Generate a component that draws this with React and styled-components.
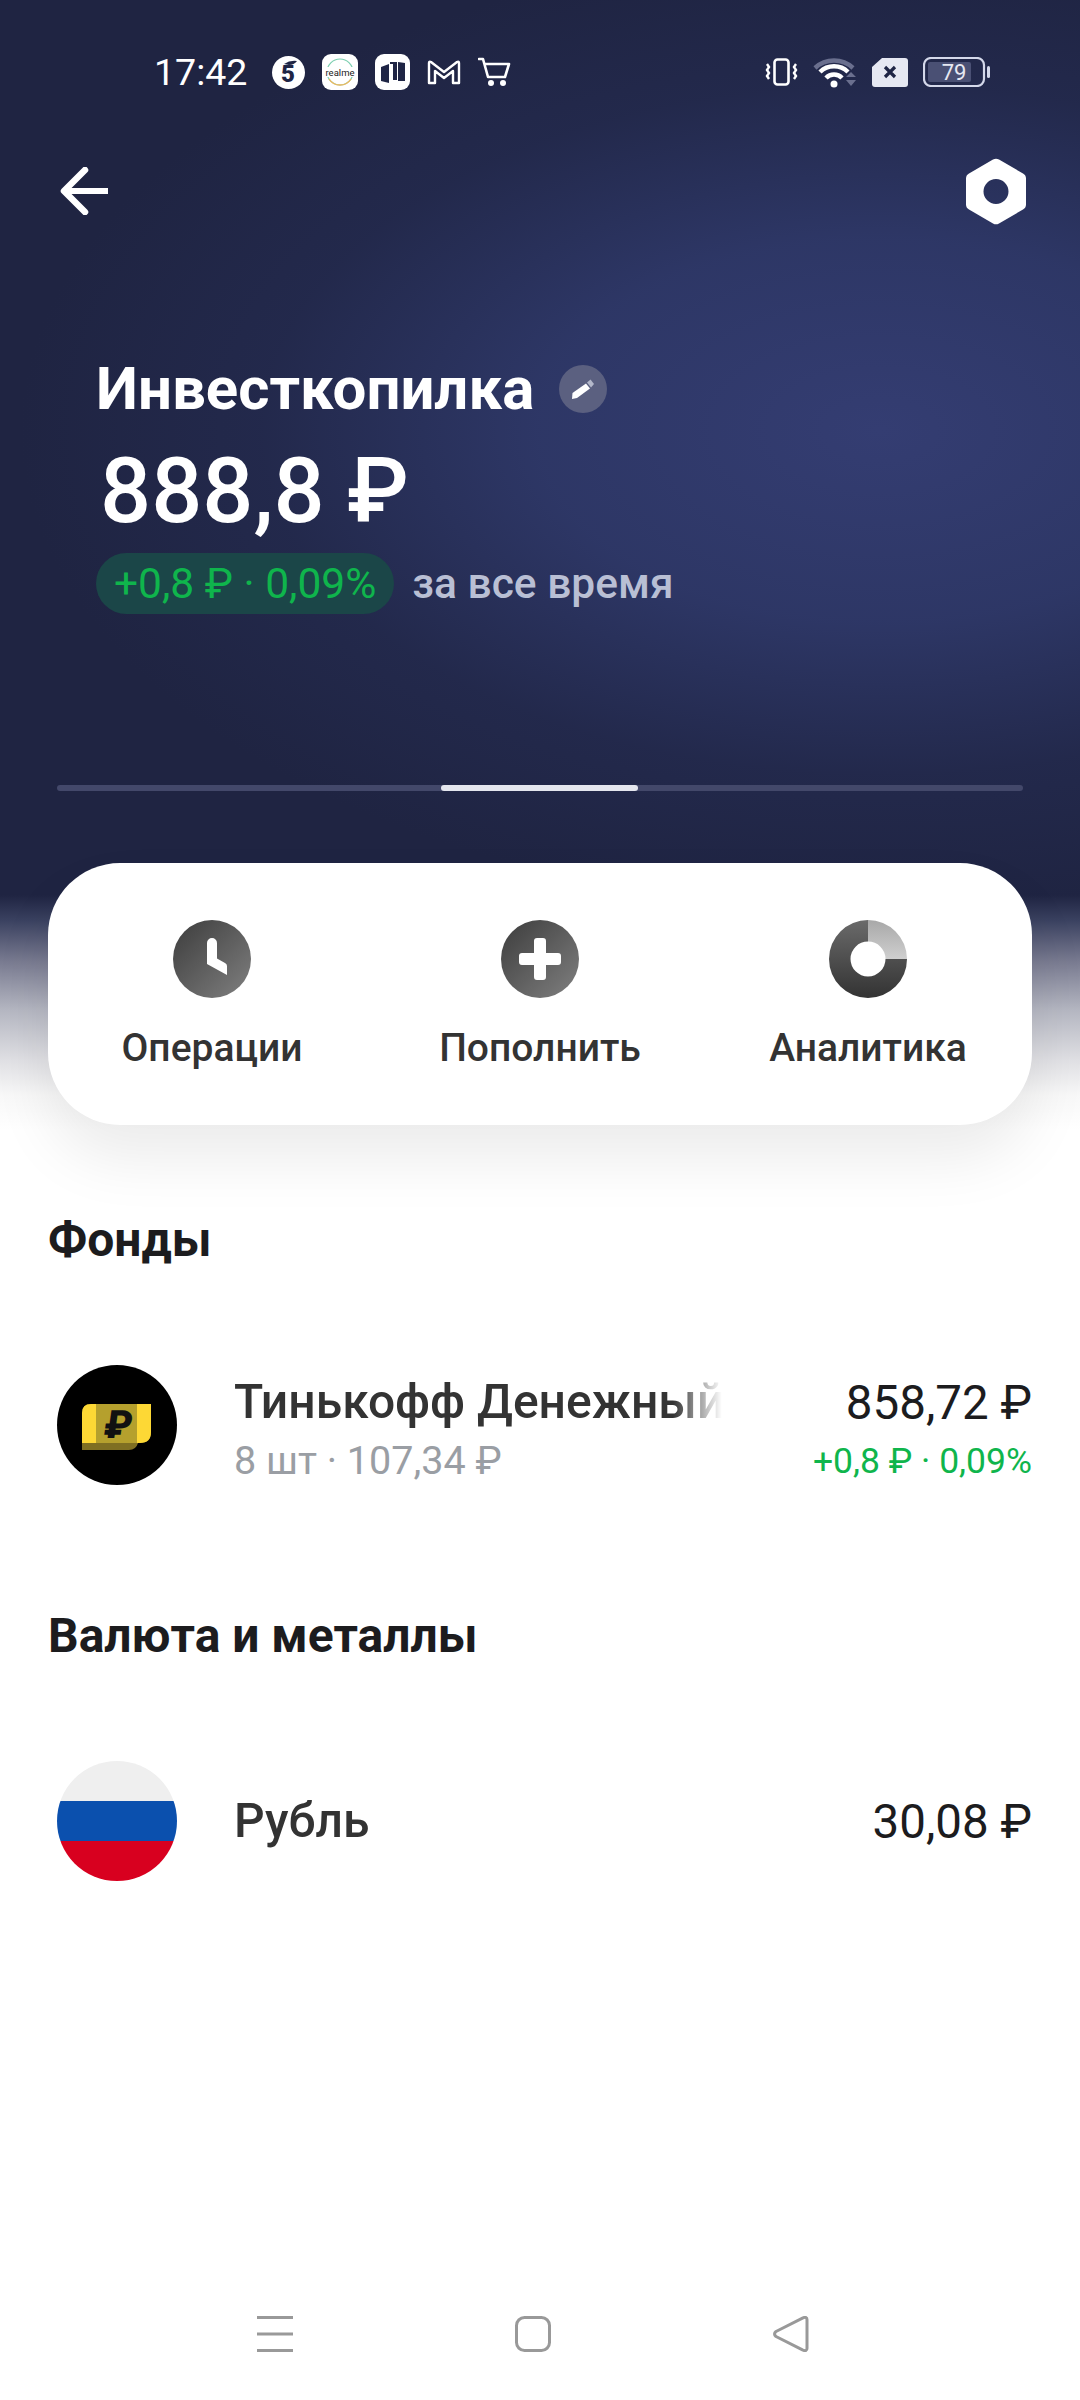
import React from "react";
import styled, { createGlobalStyle } from "styled-components";

const GlobalStyle = createGlobalStyle`
  html, body { margin: 0; padding: 0; background: #fff; }
  * { box-sizing: border-box; }
`;

const Page = styled.div`
  width: 1080px;
  height: 2400px;
  overflow: hidden;
  display: flex;
  flex-direction: column;
  font-family: Roboto, "Noto Sans", sans-serif;
  background:
    radial-gradient(ellipse 860px 480px at 880px 430px, rgba(52, 61, 114, 1) 0, rgba(48, 58, 108, 0.85) 40%, rgba(40, 48, 90, 0.4) 72%, rgba(31, 36, 66, 0) 100%) 0 0 / 1080px 915px no-repeat,
    linear-gradient(
      #1f2442 0,
      #1f2442 895px,
      #3a4160 920px,
      #77798f 960px,
      #b5b7c2 1010px,
      #e0e0e4 1060px,
      #f8f8f8 1095px,
      #ffffff 1130px
    );
`;

const StatusBar = styled.div`
  height: 142px;
  flex: none;
  display: flex;
  align-items: center;
  padding: 2px 90px 0 154px;
  color: #fff;
`;

const Clock = styled.span`
  font-size: 37.500px;
  line-height: 42px;
  width: 118px;
`;

const StatusIcons = styled.div`
  display: flex;
  align-items: center;
  gap: ${(p) => p.$gap}px;
  margin-left: ${(p) => (p.$end ? "auto" : "0")};
`;

const Toolbar = styled.div`
  height: 96px;
  flex: none;
  display: flex;
  align-items: center;
  justify-content: space-between;
  padding: 2px 54px 0 60px;
`;

const Hero = styled.div`
  flex: none;
  margin-top: 119px;
  padding-left: 96px;
  display: flex;
  flex-direction: column;
  align-items: flex-start;
`;

const TitleRow = styled.div`
  display: flex;
  align-items: center;
  gap: 25px;
  height: 64px;
`;

const Title = styled.h1`
  margin: 0;
  font-size: 60px;
  line-height: 64px;
  font-weight: 700;
  color: #fff;
`;

const EditBadge = styled.div`
  width: 48px;
  height: 48px;
  border-radius: 50%;
  background: #5b6080;
  display: flex;
  align-items: center;
  justify-content: center;
`;

const Amount = styled.div`
  margin: 19px 0 0 4px;
  font-size: 90px;
  line-height: 104px;
  font-weight: 500;
  color: #fff;
`;

const ChangeRow = styled.div`
  margin-top: 9px;
  display: flex;
  align-items: center;
  gap: 18px;
`;

const ChangePill = styled.div`
  height: 61px;
  padding: 0 18px;
  border-radius: 31px;
  background: #1b4648;
  color: #0fb54c;
  font-size: 42.500px;
  line-height: 61px;
`;

const ChangeNote = styled.span`
  font-size: 42.500px;
  font-weight: 500;
  color: #b9bfd4;
`;

const Progress = styled.div`
  flex: none;
  margin: 171px 57px 0;
  height: 6px;
  border-radius: 3px;
  background: #43486a;
  position: relative;
`;

const ProgressThumb = styled.div`
  position: absolute;
  left: 384px;
  top: 0;
  width: 197px;
  height: 6px;
  border-radius: 3px;
  background: #e4e6ee;
`;

const ActionCard = styled.div`
  flex: none;
  margin: 72px 48px 0;
  height: 262px;
  border-radius: 72px;
  background: #fff;
  box-shadow: 0 34px 60px rgba(0, 0, 0, 0.08);
  display: grid;
  grid-template-columns: repeat(3, 1fr);
  padding-top: 57px;
`;

const Action = styled.div`
  display: flex;
  flex-direction: column;
  align-items: center;
  gap: 28px;
`;

const ActionLabel = styled.span`
  font-size: 39px;
  line-height: 44px;
  font-weight: 500;
  color: #333;
`;

const Section = styled.section`
  flex: none;
  margin-top: ${(p) => p.$top}px;
  padding: 0 48px;
`;

const SectionTitle = styled.h2`
  margin: 0;
  font-size: 48px;
  line-height: 52px;
  font-weight: 700;
  color: #1c1c1e;
`;

const Row = styled.div`
  margin-top: 99px;
  height: 120px;
  display: flex;
  align-items: center;
  padding-left: 9px;
`;

const RowIcon = styled.div`
  flex: none;
  width: 120px;
  height: 120px;
  border-radius: 50%;
  overflow: hidden;
  margin-right: 57px;
`;

const RowMain = styled.div`
  flex: 1;
  min-width: 0;
  display: flex;
  flex-direction: column;
`;

const RowTitle = styled.div`
  width: 488px;
  font-size: 48px;
  line-height: 56px;
  font-weight: 500;
  color: #333;
  white-space: nowrap;
  overflow: hidden;
  -webkit-mask-image: linear-gradient(90deg, #000 90%, transparent);
  mask-image: linear-gradient(90deg, #000 90%, transparent);
`;

const RowSub = styled.div`
  margin: 9px 0 -6px;
  font-size: 39.500px;
  line-height: 44px;
  color: #9a9ea4;
`;

const RowAside = styled.div`
  flex: none;
  padding-top: 2px;
  display: flex;
  flex-direction: column;
  align-items: flex-end;
`;

const RowValue = styled.div`
  font-size: 47.500px;
  line-height: 56px;
  color: #1c1c1e;
`;

const RowDelta = styled.div`
  margin: 8px 0 -6px;
  font-size: 35.500px;
  line-height: 44px;
  color: #0fb54c;
`;

const NavBar = styled.nav`
  margin-top: auto;
  height: 84px;
  flex: none;
  display: flex;
  align-items: flex-start;
  padding-left: 257px;
  gap: 222px;
`;

const Svg = ({ w, h, children }) => (
  <svg width={w} height={h} viewBox={`0 0 ${w} ${h}`} fill="none" style={{ display: "block", flex: "none" }}>
    {children}
  </svg>
);

const OperationsIcon = () => (
  <Svg w={78} h={78}>
    <defs>
      <linearGradient id="g1" x1="0" y1="0" x2="1" y2="1">
        <stop offset="0" stopColor="#3c3c3c" />
        <stop offset="1" stopColor="#808080" />
      </linearGradient>
    </defs>
    <circle cx="39" cy="39" r="39" fill="url(#g1)" />
    <path d="M34 23a5 5 0 0 1 10 0v15.500l8 4.500q2 1.200 2 3V55L34 44Z" fill="#fff" />
  </Svg>
);

const TopUpIcon = () => (
  <Svg w={78} h={78}>
    <circle cx="39" cy="39" r="39" fill="url(#g1)" />
    <path d="M33 21a3 3 0 0 1 3-3h6a3 3 0 0 1 3 3v12h12a3 3 0 0 1 3 3v6a3 3 0 0 1-3 3H45v12a3 3 0 0 1-3 3h-6a3 3 0 0 1-3-3V45H21a3 3 0 0 1-3-3v-6a3 3 0 0 1 3-3h12Z" fill="#fff" />
  </Svg>
);

const AnalyticsIcon = () => (
  <Svg w={78} h={78}>
    <defs>
      <linearGradient id="g2" x1="0" y1="0" x2="0" y2="1">
        <stop offset="0" stopColor="#6a6a6a" />
        <stop offset="1" stopColor="#333" />
      </linearGradient>
      <linearGradient id="g3" x1="0" y1="0" x2="0" y2="1">
        <stop offset="0" stopColor="#a8a8a8" />
        <stop offset="1" stopColor="#cfcfcf" />
      </linearGradient>
    </defs>
    <path d="M39 0a39 39 0 1 0 39 39H56.500A17.500 17.500 0 1 1 39 21.500Z" fill="url(#g2)" />
    <path d="M39 0a39 39 0 0 1 39 39H56.500A17.500 17.500 0 0 0 39 21.500Z" fill="url(#g3)" />
  </Svg>
);

const FundIcon = () => (
  <Svg w={120} h={120}>
    <rect width="120" height="120" fill="#000" />
    <path d="M25 85V48q0-9 9-9h60v28q0 11-11 11H81q-2 7-9 7H25Z" fill="#7f6f22" />
    <path d="M34 39h60v28q0 11-11 11H25V48q0-9 9-9Z" fill="#fdd835" />
    <rect x="39" y="39" width="41" height="39" fill="#b5a02d" />
    <text x="60" y="73" textAnchor="middle" fontFamily="Roboto" fontWeight="900" fontSize="39" fill="#111" transform="skewX(-8) translate(10 0)">₽</text>
  </Svg>
);

const RubleIcon = () => (
  <Svg w={120} h={120}>
    <rect width="120" height="40" fill="#efefef" />
    <rect y="40" width="120" height="40" fill="#0b50ae" />
    <rect y="80" width="120" height="40" fill="#d8001f" />
  </Svg>
);

export default function App() {
  return (
    <Page>
      <GlobalStyle />
      <StatusBar>
        <Clock>17:42</Clock>
        <StatusIcons $gap={17}>
          <Svg w={33} h={33}>
            <circle cx="16.500" cy="16.500" r="16.500" fill="#fff" />
            <text x="16" y="26" textAnchor="middle" fontFamily="Roboto" fontWeight="900" fontSize="24" fill="#1f2545">5</text>
            <path d="M12 8q6-4 13-3-3 4-8 4Z" fill="#1f2545" />
          </Svg>
          <Svg w={36} h={36}>
            <rect width="36" height="36" rx="9" fill="#fff" />
            <circle cx="18" cy="18" r="13" stroke="#7ccfb0" strokeWidth="1.200" />
            <path d="M7 25a13 13 0 0 0 22 0" stroke="#f2b85c" strokeWidth="1.400" />
            <rect x="3" y="13" width="30" height="10" fill="#fff" />
            <text x="18" y="21.500" textAnchor="middle" fontFamily="Roboto" fontSize="9.500" fill="#222">realme</text>
          </Svg>
          <Svg w={35} h={36}>
            <rect width="35" height="36" rx="9" fill="#fff" />
            <path d="M6 13l8-3v19l-8-2ZM15 8h7v18h-4V10h-3ZM23 8l7 1v18h-7Z" fill="#1f2545" />
          </Svg>
          <Svg w={34} h={26}>
            <path d="M2 24V4q0-2 2-1l13 10L30 3q2-1 2 1v20h-6V12l-9 7-9-7v12Z" stroke="#fff" strokeWidth="2.400" strokeLinejoin="round" />
          </Svg>
          <Svg w={33} h={30}>
            <path d="M1 2h4l5 18h17l4-13H7" stroke="#fff" strokeWidth="2.600" strokeLinecap="round" strokeLinejoin="round" />
            <circle cx="13" cy="26" r="3" fill="#fff" />
            <circle cx="25" cy="26" r="3" fill="#fff" />
          </Svg>
        </StatusIcons>
        <StatusIcons $end $gap={15}>
          <Svg w={33} h={28}>
            <rect x="9.500" y="1.500" width="14" height="25" rx="3" stroke="#fff" strokeWidth="2.600" />
            <path d="M2 6l2 3-2 3 2 3-2 3 2 3M31 6l-2 3 2 3-2 3 2 3-2 3" stroke="#fff" strokeWidth="2.400" />
          </Svg>
          <Svg w={44} h={32}>
            <path d="M2 12a28 28 0 0 1 38 0" stroke="#6a6f8e" strokeWidth="4.500" />
            <path d="M7 16a20 20 0 0 1 28 0" stroke="#fff" strokeWidth="4.500" />
            <path d="M13 22a11 11 0 0 1 16 0" stroke="#fff" strokeWidth="4.500" />
            <circle cx="21" cy="28" r="3.500" fill="#fff" />
            <path d="M33 21l5-5 5 5ZM33 24l5 6 5-6Z" fill="#6a6f8e" />
          </Svg>
          <Svg w={36} h={29}>
            <path d="M10 0h23q3 0 3 3v23q0 3-3 3H3q-3 0-3-3V9Z" fill="#e6e8f2" />
            <path d="M13 9l10 10M23 9L13 19" stroke="#1f2545" strokeWidth="3.200" />
          </Svg>
          <Svg w={67} h={30}>
            <rect x="1" y="1" width="60" height="28" rx="7" stroke="#d4d8ea" strokeWidth="2.200" />
            <rect x="5" y="5" width="43" height="20" rx="2" fill="#4a5074" />
            <rect x="64" y="9" width="3" height="12" rx="1.500" fill="#d4d8ea" />
            <text x="31" y="23" textAnchor="middle" fontFamily="Roboto" fontSize="22" fill="#e6e8f2">79</text>
          </Svg>
        </StatusIcons>
      </StatusBar>

      <Toolbar>
        <Svg w={50} h={48}>
          <path d="M4 24h44" stroke="#fff" strokeWidth="6" />
          <path d="M25 3L4 24l21 21" stroke="#fff" strokeWidth="6.500" strokeLinecap="round" strokeLinejoin="round" />
        </Svg>
        <Svg w={60} h={67}>
          <path
            fillRule="evenodd"
            d="M27 1.500q3-1.700 6 0l24 14q3 1.700 3 5v26q0 3.300-3 5l-24 14q-3 1.700-6 0l-24-14q-3-1.700-3-5v-26q0-3.300 3-5ZM30 21a12.500 12.500 0 1 0 0 25 12.500 12.500 0 0 0 0-25Z"
            fill="#fff"
          />
        </Svg>
      </Toolbar>

      <Hero>
        <TitleRow>
          <Title>Инвесткопилка</Title>
          <EditBadge>
            <Svg w={24} h={24}>
              <path d="M1 22l.5-6L15 6.500l4 5L6 21Z" fill="#fff" />
              <path d="M16 5.500l3.500-3 3.500 4.500-3 3.500Z" fill="#b4b8ca" />
            </Svg>
          </EditBadge>
        </TitleRow>
        <Amount>888,8 ₽</Amount>
        <ChangeRow>
          <ChangePill>+0,8 ₽ · 0,09%</ChangePill>
          <ChangeNote>за все время</ChangeNote>
        </ChangeRow>
      </Hero>

      <Progress>
        <ProgressThumb />
      </Progress>

      <ActionCard>
        <Action>
          <OperationsIcon />
          <ActionLabel>Операции</ActionLabel>
        </Action>
        <Action>
          <TopUpIcon />
          <ActionLabel>Пополнить</ActionLabel>
        </Action>
        <Action>
          <AnalyticsIcon />
          <ActionLabel>Аналитика</ActionLabel>
        </Action>
      </ActionCard>

      <Section $top={89}>
        <SectionTitle>Фонды</SectionTitle>
        <Row>
          <RowIcon>
            <FundIcon />
          </RowIcon>
          <RowMain>
            <RowTitle>Тинькофф Денежный</RowTitle>
            <RowSub>8 шт · 107,34 ₽</RowSub>
          </RowMain>
          <RowAside>
            <RowValue>858,72 ₽</RowValue>
            <RowDelta>+0,8 ₽ · 0,09%</RowDelta>
          </RowAside>
        </Row>
      </Section>

      <Section $top={125}>
        <SectionTitle>Валюта и металлы</SectionTitle>
        <Row>
          <RowIcon>
            <RubleIcon />
          </RowIcon>
          <RowMain>
            <RowTitle>Рубль</RowTitle>
          </RowMain>
          <RowAside>
            <RowValue>30,08 ₽</RowValue>
          </RowAside>
        </Row>
      </Section>

      <NavBar>
        <Svg w={36} h={36}>
          <path d="M0 1.500h36M0 18h36M0 34.500h36" stroke="#999" strokeWidth="3" />
        </Svg>
        <Svg w={36} h={36}>
          <rect x="1.500" y="1.500" width="33" height="33" rx="8" stroke="#999" strokeWidth="3" />
        </Svg>
        <Svg w={36} h={36}>
          <path d="M3 15.500L30 1.800q4-1.500 4 2v28.400q0 3.500-4 2L3 20.500q-3-2.500 0-5Z" stroke="#999" strokeWidth="3" strokeLinejoin="round" />
        </Svg>
      </NavBar>
    </Page>
  );
}
